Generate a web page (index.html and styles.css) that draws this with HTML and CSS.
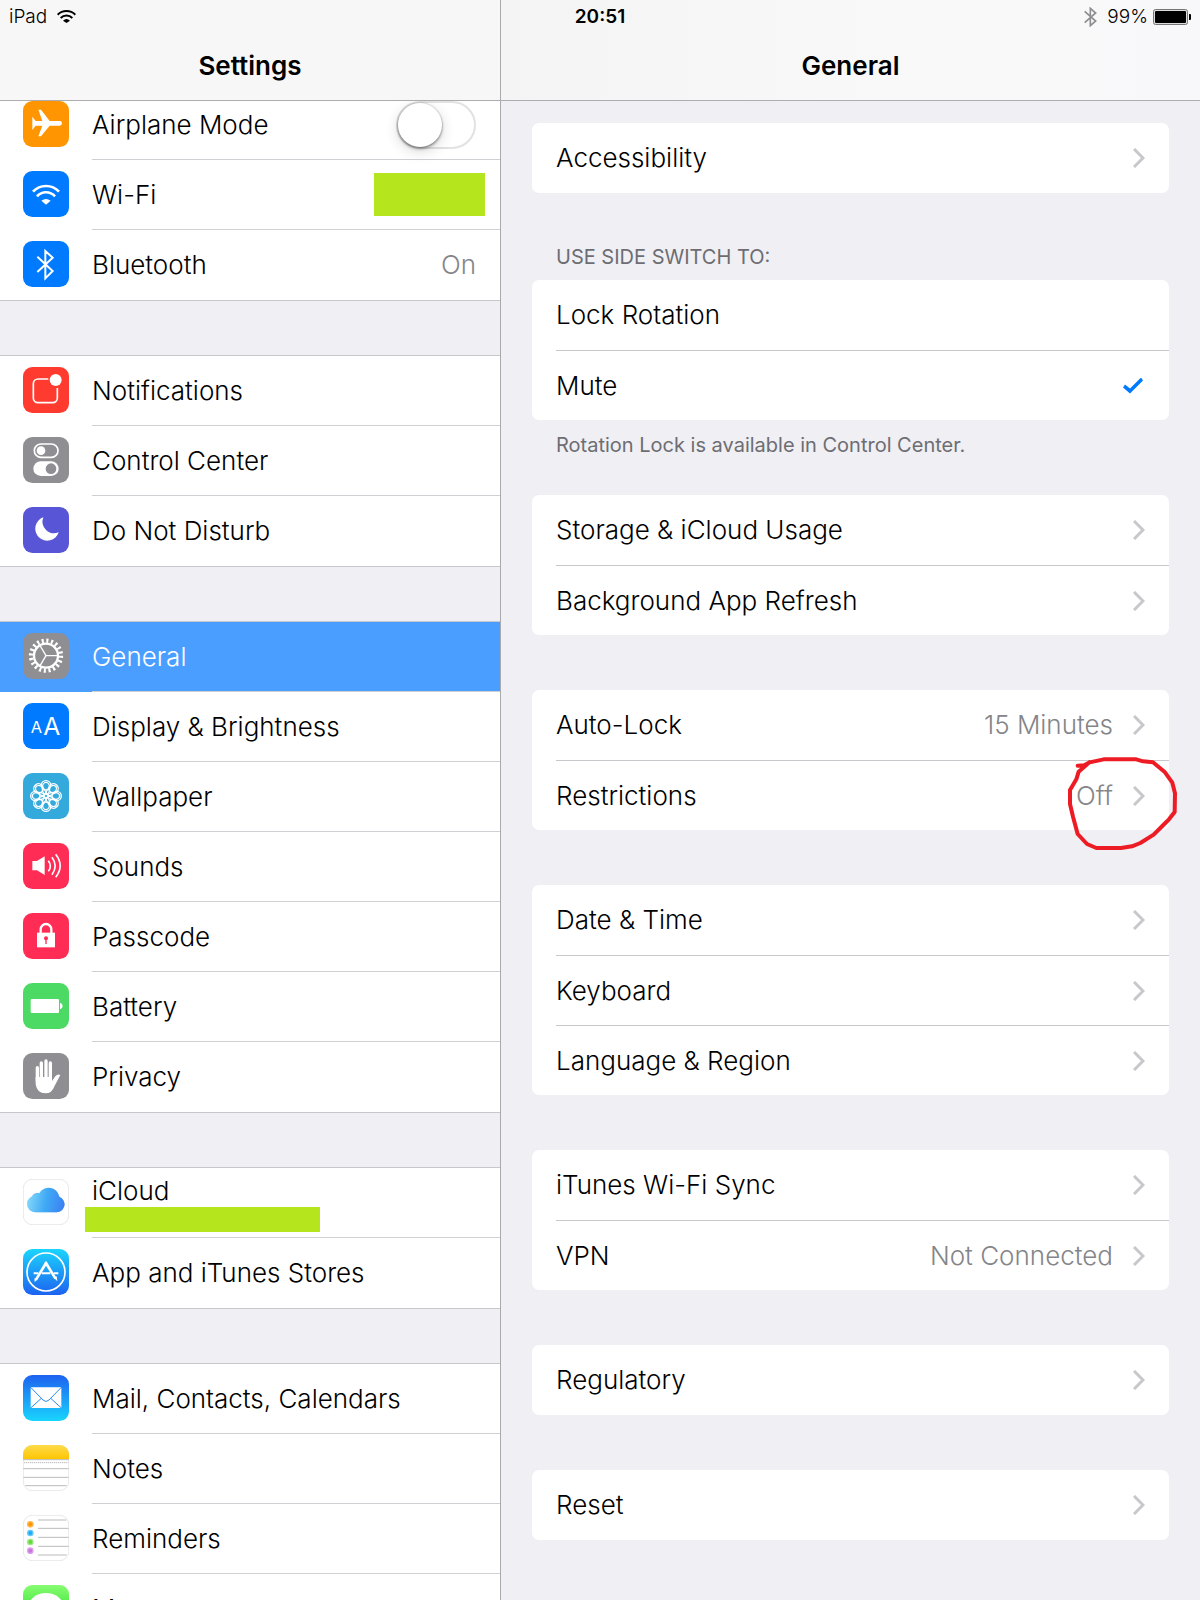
FILE: index.html
```html
<!DOCTYPE html>
<html lang="en">
<head>
<meta charset="utf-8">
<meta name="viewport" content="width=device-width, initial-scale=1">
<title>Settings</title>
<link rel="stylesheet" href="styles.css">
</head>
<body>
<div class="screen">
  <div class="status">
    <div class="status-left">
      <span>iPad</span>
      <svg width="19" height="13" viewBox="0 0 57 39" aria-hidden="true"><g fill="none" stroke="#000" stroke-width="6"><path d="M2 14A38 38 0 0 1 55 14"/><path d="M11 24A25 25 0 0 1 46 24"/></g><path d="M18 32Q28.500 22 39 32L28.500 39Z"/></svg>
    </div>
    <time class="status-time">20:51</time>
    <div class="status-right">
      <svg class="status-bt" width="13" height="20" viewBox="0 0 39 60" fill="none" stroke="#8e8e93" stroke-width="5" aria-hidden="true"><path d="M2 13L35 42L19 56V4L35 18L2 47"/></svg>
      <span>99%</span>
      <svg width="38" height="16" viewBox="0 0 38 16" aria-hidden="true"><rect x="0.500" y="0.500" width="34" height="15" rx="2" fill="#ddd" stroke="#777"/><rect x="2" y="2" width="31" height="12" rx="1"/><path d="M36 5h1a1 1 0 0 1 1 1v4a1 1 0 0 1-1 1h-1z"/></svg>
    </div>
  </div>

  <nav class="pane sidebar" aria-label="Settings">
    <header class="bar"><h1>Settings</h1></header>
    <div class="scroll side-scroll">
      <ul class="group">
        <li><label class="row">
          <svg class="icon" viewBox="0 0 138 138"><rect width="138" height="138" rx="28" fill="#ff9500"/><path fill="#fff" d="M110 60H80L54 26H46L58 60H38L28 47V87L38 74H58L46 106H54L80 74H110a7 7 0 0 0 0-14z"/></svg>
          <span class="body"><span class="name">Airplane Mode</span><input class="toggle" type="checkbox" role="switch"></span></label></li>
        <li><a class="row" href="#wifi">
          <svg class="icon" viewBox="0 0 138 138"><rect width="138" height="138" rx="28" fill="#007aff"/><g fill="none" stroke="#fff" stroke-width="8"><path d="M30 62A53 53 0 0 1 108 62"/><path d="M42 76A36 36 0 0 1 96 76"/></g><path fill="#fff" d="M55 89Q69 79 83 89L69 101Z"/></svg>
          <span class="body body-wide"><span class="name">Wi-Fi</span><span class="mask mask-network"></span></span></a></li>
        <li><a class="row" href="#bluetooth">
          <svg class="icon" viewBox="0 0 138 138"><rect width="138" height="138" rx="28" fill="#007aff"/><path fill="none" stroke="#fff" stroke-width="6" d="M43 47L89 90L67 112V30L89 50L43 93"/></svg>
          <span class="body"><span class="name">Bluetooth</span><span class="value">On</span></span></a></li>
      </ul>

      <ul class="group">
        <li><a class="row" href="#notifications">
          <svg class="icon" viewBox="0 0 138 138"><rect width="138" height="138" rx="28" fill="#ff3b30"/><path fill="none" stroke="#fff" stroke-width="5" d="M76 36H45A14 14 0 0 0 31 50V93A14 14 0 0 0 45 107H89A14 14 0 0 0 103 93V63"/><circle cx="98" cy="39" r="18" fill="#fff"/></svg>
          <span class="body"><span class="name">Notifications</span></span></a></li>
        <li><a class="row" href="#control-center">
          <svg class="icon" viewBox="0 0 138 138"><rect width="138" height="138" rx="28" fill="#8e8e93"/><rect x="34" y="21" width="71" height="40" rx="20" fill="none" stroke="#fff" stroke-width="5"/><circle cx="54" cy="41" r="13" fill="#fff"/><rect x="31" y="73" width="76" height="44" rx="22" fill="#fff"/><circle cx="84" cy="95" r="16" fill="#8e8e93"/></svg>
          <span class="body"><span class="name">Control Center</span></span></a></li>
        <li><a class="row" href="#do-not-disturb">
          <svg class="icon" viewBox="0 0 138 138"><rect width="138" height="138" rx="28" fill="#5856d6"/><path fill="#fff" d="M61 31A36 36 0 1 0 107 76A35 35 0 0 1 61 31z"/></svg>
          <span class="body"><span class="name">Do Not Disturb</span></span></a></li>
      </ul>

      <ul class="group">
        <li><a class="row selected" href="#general" aria-current="page">
          <svg class="icon" viewBox="0 0 138 138"><rect width="138" height="138" rx="28" fill="#8e8e93"/><g fill="none" stroke="#fff"><circle cx="69" cy="68" r="45" stroke-width="13" pathLength="40" stroke-dasharray="0.900 1.100"/><circle cx="69" cy="68" r="36" stroke-width="7"/><path stroke-width="4" d="M69 68H105M69 68L50 36M69 68L50 100"/></g></svg>
          <span class="body"><span class="name">General</span></span></a></li>
        <li><a class="row" href="#display">
          <svg class="icon" viewBox="0 0 138 138"><rect width="138" height="138" rx="28" fill="#007aff"/><text class="glyph" x="23" y="91" font-size="49">A</text><text class="glyph" x="61" y="96" font-size="74">A</text></svg>
          <span class="body"><span class="name">Display &amp; Brightness</span></span></a></li>
        <li><a class="row" href="#wallpaper">
          <svg class="icon" viewBox="0 0 138 138"><rect width="138" height="138" rx="28" fill="#34aadc"/><g fill="none" stroke="#fff" stroke-width="4"><g id="petal"><circle cx="69" cy="37" r="14"/><ellipse cx="69" cy="46" rx="11" ry="18"/></g><use href="#petal" transform="rotate(45 69 69)"/><use href="#petal" transform="rotate(90 69 69)"/><use href="#petal" transform="rotate(135 69 69)"/><use href="#petal" transform="rotate(180 69 69)"/><use href="#petal" transform="rotate(225 69 69)"/><use href="#petal" transform="rotate(270 69 69)"/><use href="#petal" transform="rotate(315 69 69)"/></g></svg>
          <span class="body"><span class="name">Wallpaper</span></span></a></li>
        <li><a class="row" href="#sounds">
          <svg class="icon" viewBox="0 0 138 138"><rect width="138" height="138" rx="28" fill="#ff2d55"/><path fill="#fff" d="M28 54H42L65 40V96L42 82H28z"/><g fill="none" stroke="#fff" stroke-width="5"><path d="M76 53Q88 69 76 85"/><path d="M87 43Q106 69 87 95"/><path d="M98 34Q125 69 98 103"/></g></svg>
          <span class="body"><span class="name">Sounds</span></span></a></li>
        <li><a class="row" href="#passcode">
          <svg class="icon" viewBox="0 0 138 138"><rect width="138" height="138" rx="28" fill="#ff2d55"/><path fill="#fff" d="M42 59H96V103H42z"/><path fill="none" stroke="#fff" stroke-width="7" d="M53 61V49A16 16 0 0 1 85 49V61"/><circle cx="69" cy="76" r="6" fill="#ff2d55"/><path stroke="#ff2d55" stroke-width="4" d="M69 76V93"/></svg>
          <span class="body"><span class="name">Passcode</span></span></a></li>
        <li><a class="row" href="#battery">
          <svg class="icon" viewBox="0 0 138 138"><rect width="138" height="138" rx="28" fill="#4cd964"/><rect x="23" y="48" width="85" height="42" rx="3" fill="#fff"/><path fill="#fff" d="M111 59Q119 61 119 69T111 79z"/></svg>
          <span class="body"><span class="name">Battery</span></span></a></li>
        <li><a class="row" href="#privacy">
          <svg class="icon" viewBox="0 0 138 138"><rect width="138" height="138" rx="28" fill="#8e8e93"/><g stroke="#fff" stroke-width="10" stroke-linecap="round"><path d="M43 44V84M55 30V84M69 24V84M82 30V84"/></g><path fill="#fff" d="M38 72V94Q42 121 67 121Q87 121 95 98L112 66Q104 62 97 70L87 84V72z"/></svg>
          <span class="body"><span class="name">Privacy</span></span></a></li>
      </ul>

      <ul class="group">
        <li><a class="row" href="#icloud">
          <svg class="icon" viewBox="0 0 138 138"><defs><linearGradient id="cloud" gradientUnits="userSpaceOnUse" x1="12" y1="60" x2="125" y2="80"><stop offset="0" stop-color="#83d8f8"/><stop offset="0.500" stop-color="#3fa9f5"/><stop offset="1" stop-color="#3b80f2"/></linearGradient></defs><rect x="1" y="1" width="136" height="136" rx="27" fill="#fff" stroke="#ddd" stroke-width="2"/><g fill="url(#cloud)"><circle cx="37" cy="75" r="25"/><circle cx="43" cy="58" r="17"/><circle cx="77" cy="58" r="32"/><circle cx="101" cy="76" r="24"/><path d="M37 70H101V100H37z"/></g></svg>
          <span class="body account"><span class="name">iCloud</span><span class="mask mask-account"></span></span></a></li>
        <li><a class="row" href="#stores">
          <svg class="icon" viewBox="0 0 138 138"><defs><linearGradient id="store" x2="0" y2="1"><stop offset="0" stop-color="#1ad5fd"/><stop offset="1" stop-color="#1d62f0"/></linearGradient></defs><rect width="138" height="138" rx="28" fill="url(#store)"/><g fill="none" stroke="#fff"><circle cx="69" cy="69" r="57" stroke-width="5"/><path stroke-width="8" d="M71 39L39 92M67 39L97 88"/><path stroke-width="6" d="M32 73H46M56 73H82M92 73H106"/></g><path fill="#fff" d="M34 88L43 92L35 99zM93 87L101 82L103 97z"/></svg>
          <span class="body"><span class="name">App and iTunes Stores</span></span></a></li>
      </ul>

      <ul class="group">
        <li><a class="row" href="#mail">
          <svg class="icon" viewBox="0 0 138 138"><defs><linearGradient id="mail" x2="0" y2="1"><stop offset="0" stop-color="#1d62f0"/><stop offset="1" stop-color="#19d5fd"/></linearGradient></defs><rect width="138" height="138" rx="28" fill="url(#mail)"/><rect x="23" y="37" width="92" height="62" rx="3" fill="#fff"/><path fill="none" stroke="#2b8cf5" stroke-width="3" d="M24 38L60 75Q69 84 78 75L114 38M24 98L55 70M114 98L83 70"/></svg>
          <span class="body"><span class="name">Mail, Contacts, Calendars</span></span></a></li>
        <li><a class="row" href="#notes">
          <svg class="icon" viewBox="0 0 138 138"><defs><linearGradient id="pad" x2="0" y2="1"><stop offset="0" stop-color="#fedb4b"/><stop offset="1" stop-color="#fec500"/></linearGradient></defs><rect x="1" y="1" width="136" height="136" rx="27" fill="#fff" stroke="#ddd" stroke-width="2"/><path fill="url(#pad)" d="M0 43V28A28 28 0 0 1 28 0H110A28 28 0 0 1 138 28V43z"/><path stroke="#bbb" stroke-width="3" d="M0 44H138M1 71H137M1 97H137M7 122H131"/><path stroke="#bbb" stroke-width="3" stroke-dasharray="4 2" d="M3 53H136"/></svg>
          <span class="body"><span class="name">Notes</span></span></a></li>
        <li><a class="row" href="#reminders">
          <svg class="icon" viewBox="0 0 138 138"><rect x="1" y="1" width="136" height="136" rx="27" fill="#fff" stroke="#ddd" stroke-width="2"/><path stroke="#bbb" stroke-width="3" d="M45 15H130M45 40H137M45 67H137M45 94H137M45 120H131"/><g stroke-width="4"><circle cx="22" cy="28" r="8" fill="#ff9500" stroke="#ffb750"/><circle cx="22" cy="54" r="8" fill="#1badf8" stroke="#69c9fa"/><circle cx="22" cy="81" r="8" fill="#63da38" stroke="#9be881"/><circle cx="22" cy="107" r="8" fill="#cc73e1" stroke="#dda1eb"/></g></svg>
          <span class="body"><span class="name">Reminders</span></span></a></li>
        <li><a class="row" href="#messages">
          <svg class="icon" viewBox="0 0 138 138"><defs><linearGradient id="msg" x2="0" y2="1"><stop offset="0" stop-color="#87fc70"/><stop offset="1" stop-color="#0bd318"/></linearGradient></defs><rect width="138" height="138" rx="28" fill="url(#msg)"/><ellipse cx="69" cy="65" rx="52" ry="41" fill="#fff"/></svg>
          <span class="body"><span class="name">Messages</span></span></a></li>
      </ul>
    </div>
  </nav>

  <main class="pane detail">
    <header class="bar bar-detail"><h2>General</h2></header>
    <div class="scroll detail-scroll">
      <ul class="card">
        <li><a class="line" href="#accessibility"><span class="name">Accessibility</span><svg class="chevron" viewBox="0 0 12 20"><path d="M1 1L10 10L1 19"/></svg></a></li>
      </ul>

      <fieldset class="choice">
        <legend class="caption">USE SIDE SWITCH TO:</legend>
        <ul class="card">
          <li><label class="line"><span class="name">Lock Rotation</span><input class="check" type="radio" name="side-switch"></label></li>
          <li><label class="line"><span class="name">Mute</span><input class="check" type="radio" name="side-switch" checked></label></li>
        </ul>
        <p class="caption footnote">Rotation Lock is available in Control Center.</p>
      </fieldset>

      <ul class="card">
        <li><a class="line" href="#storage"><span class="name">Storage &amp; iCloud Usage</span><svg class="chevron" viewBox="0 0 12 20"><path d="M1 1L10 10L1 19"/></svg></a></li>
        <li><a class="line" href="#refresh"><span class="name">Background App Refresh</span><svg class="chevron" viewBox="0 0 12 20"><path d="M1 1L10 10L1 19"/></svg></a></li>
      </ul>

      <ul class="card">
        <li><a class="line" href="#auto-lock"><span class="name">Auto-Lock</span><span class="value">15 Minutes</span><svg class="chevron" viewBox="0 0 12 20"><path d="M1 1L10 10L1 19"/></svg></a></li>
        <li class="marked"><a class="line" href="#restrictions"><span class="name">Restrictions</span><span class="value">Off</span><svg class="chevron" viewBox="0 0 12 20"><path d="M1 1L10 10L1 19"/></svg></a>
          <svg class="marker" viewBox="80 225 336 291" aria-hidden="true"><path d="M112 257L132 256L148 247L190 238H288L308 244L338 247L374 277L396 308L404 340L403 396L386 418L372 432L340 464L300 489L275 499L242 504H168L140 492L112 462L98 410L89 372V330L108 298L115 275L148 246"/></svg></li>
      </ul>

      <ul class="card">
        <li><a class="line" href="#date"><span class="name">Date &amp; Time</span><svg class="chevron" viewBox="0 0 12 20"><path d="M1 1L10 10L1 19"/></svg></a></li>
        <li><a class="line" href="#keyboard"><span class="name">Keyboard</span><svg class="chevron" viewBox="0 0 12 20"><path d="M1 1L10 10L1 19"/></svg></a></li>
        <li><a class="line" href="#language"><span class="name">Language &amp; Region</span><svg class="chevron" viewBox="0 0 12 20"><path d="M1 1L10 10L1 19"/></svg></a></li>
      </ul>

      <ul class="card">
        <li><a class="line" href="#itunes-sync"><span class="name">iTunes Wi-Fi Sync</span><svg class="chevron" viewBox="0 0 12 20"><path d="M1 1L10 10L1 19"/></svg></a></li>
        <li><a class="line" href="#vpn"><span class="name">VPN</span><span class="value">Not Connected</span><svg class="chevron" viewBox="0 0 12 20"><path d="M1 1L10 10L1 19"/></svg></a></li>
      </ul>

      <ul class="card">
        <li><a class="line" href="#regulatory"><span class="name">Regulatory</span><svg class="chevron" viewBox="0 0 12 20"><path d="M1 1L10 10L1 19"/></svg></a></li>
      </ul>

      <ul class="card">
        <li><a class="line" href="#reset"><span class="name">Reset</span><svg class="chevron" viewBox="0 0 12 20"><path d="M1 1L10 10L1 19"/></svg></a></li>
      </ul>
    </div>
  </main>
</div>
</body>
</html>
```
FILE: styles.css
```css
* { box-sizing: border-box; }

body {
  margin: 0;
  background: #efeff4;
  color: #000;
  font-family: Inter, "Liberation Sans", sans-serif;
  font-size: 26px;
  font-weight: 300;
  line-height: 32px;
}

ul { list-style: none; margin: 0; padding: 0; }
a { color: inherit; text-decoration: none; }
svg { display: block; flex: none; }

.screen {
  position: relative;
  display: grid;
  grid-template-columns: 5fr 7fr;
  height: 100vh;
}

/* Status bar, drawn over both panes */
.status {
  position: absolute;
  inset: 0 0 auto;
  z-index: 1;
  display: grid;
  grid-template-columns: 1fr auto 1fr;
  align-items: center;
  height: 33px;
  padding: 0 9px;
  font-size: 19px;
}
.status-left, .status-right { display: flex; align-items: center; }
.status-left { gap: 10px; }
.status-right { justify-content: flex-end; gap: 5px; }
.status-bt { margin-right: 5px; }
.status-time { font-weight: 600; }

/* Panes */
.pane { display: flex; flex-direction: column; min-width: 0; min-height: 0; }
.detail { border-left: 1px solid #a9a9ae; }

.bar {
  flex: none;
  height: 101px;
  padding-top: 50px;
  border-bottom: 1px solid #adadb1;
  background: #f7f7f8;
  text-align: center;
}
.bar-detail { background: linear-gradient(90deg, #f4f4f4, #f9f9f9 60%, #f8f8fa); }
h1, h2 { margin: 0; font-size: 26px; font-weight: 600; line-height: 32px; }

.scroll { flex: 1; min-height: 0; overflow-y: auto; scrollbar-width: none; }

/* Sidebar list, resting slightly scrolled under its title bar */
.group {
  margin-bottom: 54px;
  border: solid #c8c7cc;
  border-width: 1px 0;
  background: #fff;
}
.group:first-child { margin-top: -12px; }
.row { display: flex; gap: 23px; padding-left: 23px; }
.icon { width: 46px; height: 46px; margin-top: 11px; }
.glyph { fill: #fff; font-weight: 400; }
.body {
  flex: 1;
  display: flex;
  align-items: center;
  justify-content: space-between;
  height: 70px;
  padding-right: 24px;
  border-bottom: 1px solid #d0d0d4;
}
.group li:last-child .body { border-bottom-color: transparent; }
.body-wide { padding-right: 15px; }
.selected { background: #4a9eff; color: #fff; }
.value { color: #858589; }

.mask { background: #b5e61d; }
.mask-network { width: 111px; height: 43px; }
.mask-account { width: 235px; height: 25px; margin-left: -7px; }
.account { flex-direction: column; align-items: flex-start; justify-content: flex-end; padding-bottom: 5px; }

.toggle {
  appearance: none;
  width: 80px;
  height: 48px;
  margin: 0;
  border: 2px solid #e2e2e2;
  border-radius: 24px;
  background: #fff;
}
.toggle::before {
  content: "";
  display: block;
  width: 44px;
  height: 44px;
  border-radius: 50%;
  background: #fff;
  box-shadow: 0 0 1px 1px rgba(0, 0, 0, .1), 0 2px 3px rgba(0, 0, 0, .35), 0 4px 14px rgba(0, 0, 0, .16);
}
.toggle:checked { background: #4cd964; }
.toggle:checked::before { margin-left: auto; }

/* Detail cards */
.detail-scroll { padding: 22px 31px; }
.card { margin-bottom: 55px; border-radius: 7px; background: #fff; }
.line {
  display: flex;
  align-items: center;
  height: 70px;
  margin-left: 24px;
  padding-right: 24px;
}
.line .name { flex: 1; }
.card li + li .line { border-top: 1px solid #c8c7cc; }
.chevron {
  width: 12px;
  height: 20px;
  margin-left: 20px;
  fill: none;
  stroke: #c7c7cc;
  stroke-width: 3;
}

.choice { margin: -3px 0 38px; padding: 0; border: 0; }
.choice .card { margin: 0; }
.caption {
  margin: 0;
  padding: 0 24px;
  color: #6d6d72;
  font-size: 20px;
  font-weight: 400;
  line-height: 24px;
}
legend.caption { padding-bottom: 11px; }
.footnote { padding-top: 13px; }

.check {
  appearance: none;
  width: 20px;
  height: 16px;
  margin: 0 2px 0 0;
}
.check:checked {
  background: #007aff;
  clip-path: polygon(0 10px, 2px 7px, 7px 11px, 18px 0, 20px 3px, 7px 16px);
}

/* Hand-drawn ring around the Restrictions value */
.marked { position: relative; }
.marker {
  position: absolute;
  top: -5px;
  right: -10px;
  width: 112px;
  height: 97px;
  fill: none;
  stroke: #ed1c24;
  stroke-width: 12;
  stroke-linejoin: round;
  stroke-linecap: round;
  pointer-events: none;
}
```
